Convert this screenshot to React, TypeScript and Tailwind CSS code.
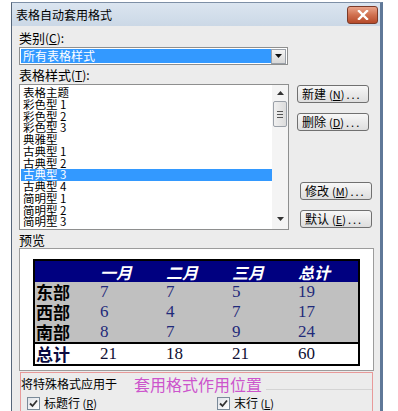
import React from "react";

const cjk = "font-['Noto_Sans_CJK_SC','Noto_Sans',sans-serif]";

function Btn({ text, k, shift }: { text: string; k: string; shift?: boolean }) {
  return (
    <div
      className={`h-[18px] w-[72px] ${shift ? "ml-[3px]" : ""} flex items-center rounded-[3px] border border-[#707070] bg-gradient-to-b from-[#f7f7f7] to-[#dedede] pl-[4px] text-[12px] leading-[16px] text-black`}
    >
      <span>{text}</span>
      <span className="ml-[3px] text-[11px]">
        (<span className="underline">{k}</span>)
      </span>
      <span className="ml-[2px] tracking-[2px] text-[11px]">...</span>
    </div>
  );
}

function Check({ label, k }: { label: string; k: string }) {
  return (
    <div className="flex items-center">
      <div className="flex h-[13px] w-[13px] items-center justify-center border border-[#7a8a99] bg-gradient-to-br from-[#dfe3e8] to-[#ffffff]">
        <svg width="9" height="9" viewBox="0 0 9 9">
          <path d="M1 4.5 L3.5 7 L8 1.5" stroke="#333" strokeWidth="1.8" fill="none" />
        </svg>
      </div>
      <span className="ml-[4px] text-[12px] leading-[14px] text-black">
        {label}
        <span className="text-[11px]">
          {" "}(<span className="underline">{k}</span>)
        </span>
      </span>
    </div>
  );
}

const items = [
  "表格主题",
  "彩色型 1",
  "彩色型 2",
  "彩色型 3",
  "典雅型",
  "古典型 1",
  "古典型 2",
  "古典型 3",
  "古典型 4",
  "简明型 1",
  "简明型 2",
  "简明型 3",
];

const rows = [
  { name: "东部", v: ["7", "7", "5", "19"] },
  { name: "西部", v: ["6", "4", "7", "17"] },
  { name: "南部", v: ["8", "7", "9", "24"] },
];

const cols = "grid grid-cols-[65px_66px_66px_66px_1fr]";

export default function App() {
  return (
    <div className={`relative h-[411px] w-[398px] overflow-hidden bg-white ${cjk}`}>
      <div className="flex pl-[11px] pt-[2px]">
        <div className="h-[420px] w-[372px] border-l border-t border-l-[#56667a] border-t-[#7d8fa6] border-r-[3px] border-r-[#5f7898] bg-[#ececec] flex flex-col">
          {/* title bar */}
          <div className="flex h-[23px] items-center justify-between bg-gradient-to-b from-[#dbe5f0] to-[#cbd8e6] pl-[4px] pr-[2px]">
            <span className="text-[12px] leading-[14px] text-black">表格自动套用格式</span>
            <div className="flex h-[18px] w-[31px] items-center justify-center rounded-[3px] border border-[#7a3a28] bg-gradient-to-b from-[#e9a48a] via-[#d0704f] to-[#b54a2a]">
              <svg width="12" height="10" viewBox="0 0 12 10">
                <path d="M2 1 L10 9 M10 1 L2 9" stroke="white" strokeWidth="2.4" strokeLinecap="square" />
              </svg>
            </div>
          </div>

          {/* client */}
          <div className="flex flex-col pl-[7px]">
            <div className="mt-[3px] h-[17px] text-[13px] leading-[17px] text-black">
              类别<span className="text-[12px]">(<span className="underline">C</span>):</span>
            </div>
            <div className="mt-[1px] flex h-[18px] w-[269px] items-center border border-[#8e8f8f] bg-white p-[1px]">
              <div className="flex h-[14px] w-[250px] items-center bg-[#3399ff] pl-[2px] text-[12px] leading-[14px] text-white">
                所有表格样式
              </div>
              <div className="ml-auto flex h-[15px] w-[15px] items-center justify-center border border-[#9aa0a8] bg-gradient-to-b from-[#f4f4f4] to-[#d8d8d8]">
                <svg width="7" height="4" viewBox="0 0 7 4">
                  <path d="M0 0 L7 0 L3.5 4 Z" fill="#111" />
                </svg>
              </div>
            </div>
            <div className="h-[19px] pt-[1px] text-[13px] leading-[17px] text-black">
              表格样式<span className="text-[12px]">(<span className="underline">T</span>):</span>
            </div>

            {/* list + buttons */}
            <div className="flex h-[146px]">
              <div className="flex h-[146px] w-[270px] border border-[#8e8f8f] bg-white">
                <div className="flex-1 pl-[1px] pt-[2px]">
                  {items.map((it, i) => (
                    <div
                      key={it}
                      className={`h-[11.75px] pl-[2px] text-[11.5px] leading-[11.75px] ${
                        i === 7 ? "bg-[#3399ff] text-white" : "text-black"
                      }`}
                    >
                      {it}
                    </div>
                  ))}
                </div>
                <div className="relative flex w-[16px] flex-col items-center bg-[#f4f4f4]">
                  <svg className="mt-[6px]" width="7" height="4" viewBox="0 0 7 4">
                    <path d="M0 4 L7 4 L3.5 0 Z" fill="#333" />
                  </svg>
                  <div className="mt-[6px] flex h-[26px] w-[14px] flex-col items-center justify-center gap-[2px] rounded-[2px] border border-[#9aa0a8] bg-gradient-to-r from-[#f0f0f0] to-[#dcdcdc]">
                    <div className="h-px w-[6px] bg-[#555]" />
                    <div className="h-px w-[6px] bg-[#555]" />
                    <div className="h-px w-[6px] bg-[#555]" />
                  </div>
                  <svg className="mt-auto mb-[8px]" width="7" height="4" viewBox="0 0 7 4">
                    <path d="M0 0 L7 0 L3.5 4 Z" fill="#333" />
                  </svg>
                </div>
              </div>
              <div className="ml-[8px] flex flex-col">
                <div className="mt-[1px]">
                  <Btn text="新建" k="N" />
                </div>
                <div className="mt-[10px]">
                  <Btn text="删除" k="D" />
                </div>
                <div className="mt-[51px]">
                  <Btn text="修改" k="M" shift />
                </div>
                <div className="mt-[10px]">
                  <Btn text="默认" k="E" shift />
                </div>
              </div>
            </div>

            <div className="h-[18px] pt-[2px] text-[13px] leading-[16px] text-black">预览</div>

            {/* preview */}
            <div className="h-[123px] w-[355px] border border-[#9c9c9c] bg-white pl-[13px] pt-[10px]">
              <div className="w-[327px] border-2 border-black">
                <div className={`${cols} h-[21px] items-center bg-[#000080] text-[16px] font-bold italic leading-[20px] text-white`}>
                  <div />
                  <div>一月</div>
                  <div>二月</div>
                  <div>三月</div>
                  <div>总计</div>
                </div>
                {rows.map((r) => (
                  <div key={r.name} className={`${cols} h-[20px] items-center bg-[#c0c0c0]`}>
                    <div className="pl-[1px] text-[17px] font-bold leading-[20px] text-black">{r.name}</div>
                    {r.v.map((n, j) => (
                      <div key={j} className="font-['Liberation_Serif',serif] text-[17px] leading-[20px] text-[#1f2a7a]">
                        {n}
                      </div>
                    ))}
                  </div>
                ))}
                <div className={`${cols} h-[22px] items-center border-t-2 border-black bg-white`}>
                  <div className="pl-[1px] text-[17px] font-bold leading-[20px] text-[#0a0a40]">总计</div>
                  {["21", "18", "21", "60"].map((n, j) => (
                    <div key={j} className="font-['Liberation_Serif',serif] text-[17px] leading-[20px] text-[#111133]">
                      {n}
                    </div>
                  ))}
                </div>
              </div>
            </div>

            {/* group */}
            <div className="ml-[1px] mt-[1px] h-[50px] w-[353px] border border-[#e89a9a]">
              <div className="flex h-[22px] items-center">
                <span className="text-[12px] leading-[14px] text-black">将特殊格式应用于</span>
                <span className="ml-[17px] text-[16px] leading-[18px] text-[#cc55cc]">套用格式作用位置</span>
                <div className="ml-[4px] mt-[10px] h-px flex-1 bg-[#d4d4d4]" />
              </div>
              <div className="mt-[1px] flex pl-[6px]">
                <div className="w-[190px]">
                  <Check label="标题行" k="R" />
                </div>
                <Check label="末行" k="L" />
              </div>
            </div>
          </div>
        </div>
      </div>
    </div>
  );
}
